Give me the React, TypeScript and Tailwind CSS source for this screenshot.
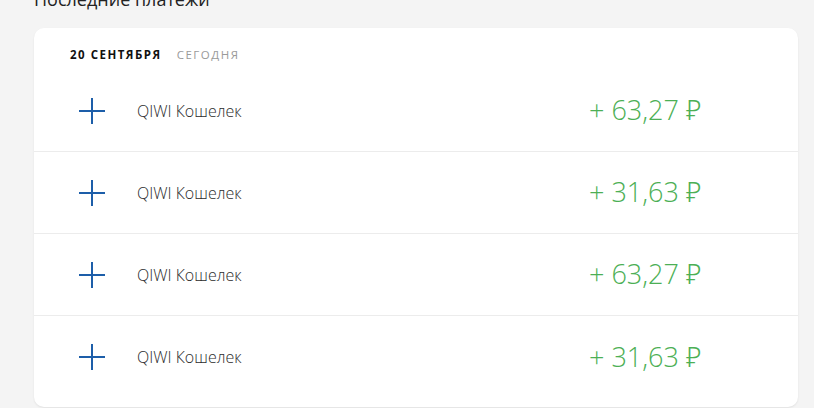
const payments = [
  { id: 1, name: 'QIWI Кошелек', amount: '63,27' },
  { id: 2, name: 'QIWI Кошелек', amount: '31,63' },
  { id: 3, name: 'QIWI Кошелек', amount: '63,27' },
  { id: 4, name: 'QIWI Кошелек', amount: '31,63' },
]

function PlusIcon() {
  return (
    <svg width="28" height="28" viewBox="0 0 28 28" fill="none">
      <path d="M14 1v26M1 14h26" stroke="#1d5ea9" strokeWidth="2" />
    </svg>
  )
}

export default function App() {
  return (
    <div className="min-h-[408px] w-[814px] overflow-hidden bg-[#f4f4f4] pl-[34px] pr-4 font-['Open_Sans','Noto_Sans',sans-serif]">
      <h2 className="-mt-[13px] mb-[17px] text-[18px] leading-[24px] text-[#222]">
        Последние платежи
      </h2>

      <section className="w-[764px] rounded-[10px] bg-white pb-[9px] shadow-[0_1px_2px_rgba(0,0,0,0.08)]">
        <div className="flex items-center gap-[15px] pl-9 pt-[19px] pb-[7px] text-[11.5px] leading-4 tracking-[1.5px]">
          <span className="font-bold text-[#111]">20 СЕНТЯБРЯ</span>
          <span className="text-[#9a9a9a]">СЕГОДНЯ</span>
        </div>

        {payments.map((item, index) => (
          <div
            key={item.id}
            className={`flex h-[82px] items-center ${
              index < payments.length - 1 ? 'border-b border-[#ececec]' : ''
            }`}
          >
            <div className="flex w-[103px] justify-center pl-[13px]">
              <PlusIcon />
            </div>
            <span className="flex-1 text-[16px] font-light text-[#2b2b2b]">
              {item.name}
            </span>
            <span className="w-[209px] text-[27px] font-light text-[#4caf55]">
              + {item.amount}{' '}
              <span className="font-['Noto_Sans',sans-serif] font-light">₽</span>
            </span>
          </div>
        ))}
      </section>
    </div>
  )
}
